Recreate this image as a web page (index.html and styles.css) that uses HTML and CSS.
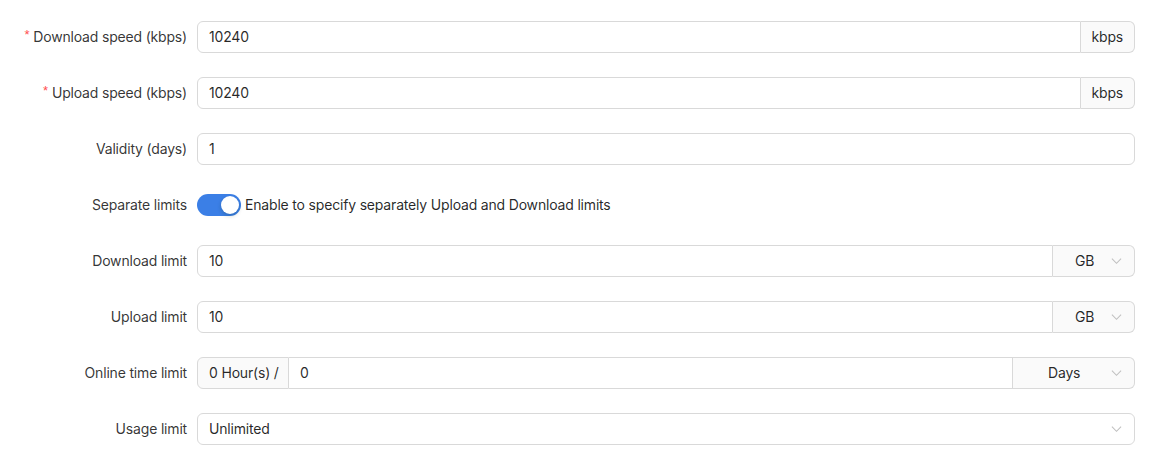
FILE: index.html
```html
<!DOCTYPE html>
<html>
<head>
<meta charset="utf-8">
<link rel="stylesheet" href="styles.css">
</head>
<body>
<form class="form">
  <div class="row">
    <label class="label"><span class="req">*</span>Download speed (kbps)</label>
    <div class="control group">
      <div class="input grow first">10240</div>
      <div class="addon last">kbps</div>
    </div>
  </div>
  <div class="row">
    <label class="label"><span class="req">*</span>Upload speed (kbps)</label>
    <div class="control group">
      <div class="input grow first">10240</div>
      <div class="addon last">kbps</div>
    </div>
  </div>
  <div class="row">
    <label class="label">Validity (days)</label>
    <div class="control group">
      <div class="input grow single">1</div>
    </div>
  </div>
  <div class="row">
    <label class="label">Separate limits</label>
    <div class="control switch-line">
      <span class="switch"><span class="knob"></span></span>
      <span class="switch-text">Enable to specify separately Upload and Download limits</span>
    </div>
  </div>
  <div class="row">
    <label class="label">Download limit</label>
    <div class="control group">
      <div class="input grow first">10</div>
      <div class="select-addon unit last"><span class="sel-val">GB</span><svg class="chev" viewBox="0 0 12 8"><path d="M1 1.5 L6 6.5 L11 1.5" /></svg></div>
    </div>
  </div>
  <div class="row">
    <label class="label">Upload limit</label>
    <div class="control group">
      <div class="input grow first">10</div>
      <div class="select-addon unit last"><span class="sel-val">GB</span><svg class="chev" viewBox="0 0 12 8"><path d="M1 1.5 L6 6.5 L11 1.5" /></svg></div>
    </div>
  </div>
  <div class="row">
    <label class="label">Online time limit</label>
    <div class="control group">
      <div class="addon first hours">0 Hour(s) /</div>
      <div class="input grow mid">0</div>
      <div class="select-addon days last"><span class="sel-val">Days</span><svg class="chev" viewBox="0 0 12 8"><path d="M1 1.5 L6 6.5 L11 1.5" /></svg></div>
    </div>
  </div>
  <div class="row">
    <label class="label">Usage limit</label>
    <div class="control group">
      <div class="select single grow"><span>Unlimited</span><svg class="chev" viewBox="0 0 12 8"><path d="M1 1.5 L6 6.5 L11 1.5" /></svg></div>
    </div>
  </div>
</form>
</body>
</html>
```
FILE: styles.css
```css
* { box-sizing: border-box; }
html, body { margin: 0; padding: 0; background: #fff; }
body {
  font-family: Inter, "Noto Sans", sans-serif;
  font-size: 14px;
  letter-spacing: -0.18px;
  color: rgba(0,0,0,0.85);
}
.form {
  padding: 21px 24px 0 0;
  display: flex;
  flex-direction: column;
  gap: 24px;
}
.row {
  display: flex;
  align-items: center;
  height: 32px;
}
.label {
  width: 187px;
  flex: none;
  text-align: right;
  margin-right: 10px;
  margin-top: -1px;
  color: rgba(0,0,0,0.8);
  white-space: nowrap;
}
.req {
  color: #ff4d4f;
  font-family: "Liberation Sans", sans-serif;
  font-size: 13px;
  margin-right: 4px;
  position: relative;
  top: -3px;
}
.control { flex: 1; min-width: 0; display: flex; height: 32px; }
.group { align-items: stretch; }
.input, .addon, .select-addon, .select {
  border: 1px solid #d9d9d9;
  height: 32px;
  display: flex;
  align-items: center;
  padding: 0 11px 1px;
  white-space: nowrap;
}
.grow { flex: 1; }
.first { border-radius: 6px 0 0 6px; }
.last { border-radius: 0 6px 6px 0; border-left: none; }
.mid { border-left: none; }
.single { border-radius: 6px; }
.addon {
  background: #fafafa;
  flex: none;
}
.hours { width: 92px; }
.select-addon {
  background: #fafafa;
  flex: none;
  justify-content: space-between;
  padding-right: 12px;
}
.unit { width: 82px; padding-left: 22px; }
.days { width: 122px; padding-left: 35px; }
.chev {
  width: 11px;
  height: 8px;
  fill: none;
  stroke: #bfbfbf;
  stroke-width: 1.1;
}
.select { justify-content: space-between; padding-right: 12px; }
.switch-line { align-items: center; gap: 4px; }
.switch-text { margin-top: -2px; }
.switch {
  width: 44px;
  height: 22px;
  border-radius: 11px;
  background: #3b7fe6;
  position: relative;
  flex: none;
}
.knob {
  position: absolute;
  top: 2px;
  right: 2px;
  width: 18px;
  height: 18px;
  border-radius: 50%;
  background: #fff;
  box-shadow: 0 2px 4px rgba(0,35,11,0.2);
}
```
